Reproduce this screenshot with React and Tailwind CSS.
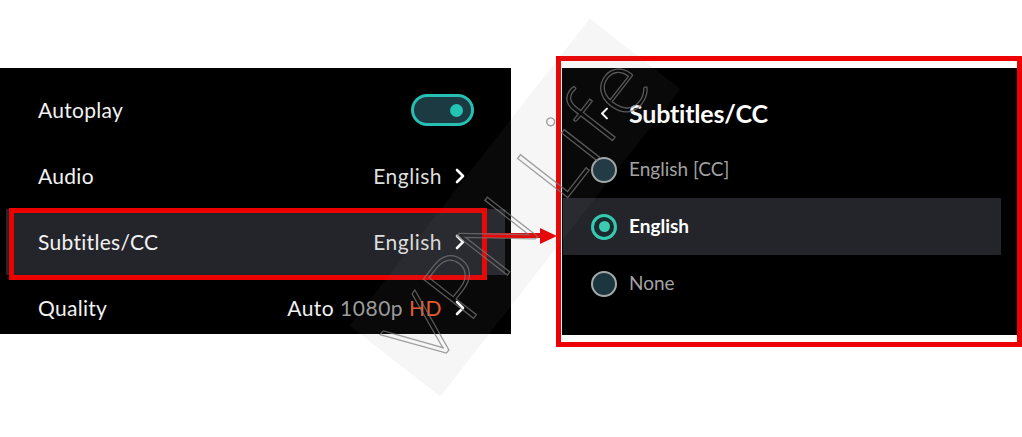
import React from "react";

const font = "font-['Lato','Liberation_Sans',sans-serif]";

function Chevron({ dir = "right", className = "" }) {
  const d = dir === "right" ? "M2 2l6 6-6 6" : "M8 2L2 8l6 6";
  return (
    <svg width="10" height="16" viewBox="0 0 10 16" className={className}>
      <path d={d} fill="none" stroke="currentColor" strokeWidth="2.6" strokeLinecap="round" strokeLinejoin="round" />
    </svg>
  );
}

function Toggle() {
  return (
    <div className="w-[63px] h-[32px] rounded-full border-[3px] border-[#25bfb3] bg-[#1c3a41] flex items-center justify-end pr-[8px]">
      <div className="w-[13px] h-[13px] rounded-full bg-[#22c4b6]" />
    </div>
  );
}

function SettingRow({ label, value, active, children }) {
  return (
    <div className={`mx-[6px] h-[66px] flex items-center justify-between pl-[32px] pr-[40px] ${active ? "bg-[#24252b]" : ""}`}>
      <span className="text-[21px] tracking-[0.3px] text-[#f2f2f2]">{label}</span>
      {children || (
        <div className="flex items-center gap-[13px] text-[21px] tracking-[0.5px] text-[#dedede]">
          <span>{value}</span>
          <Chevron className="text-white" />
        </div>
      )}
    </div>
  );
}

function Radio({ checked }) {
  if (checked) {
    return (
      <div className="w-[26px] h-[26px] rounded-full border-[3px] border-[#35c9b0] bg-[#1b2a2e] flex items-center justify-center">
        <div className="w-[11px] h-[11px] rounded-full bg-[#3ccbb0]" />
      </div>
    );
  }
  return <div className="w-[26px] h-[26px] rounded-full border-[2.5px] border-[#a3a9ab] bg-[#1c3640]" />;
}

function Option({ label, checked }) {
  return (
    <div className={`ml-[1px] mr-[16px] h-[57px] flex items-center pl-[28px] gap-[12px] ${checked ? "bg-[#24252b]" : ""}`}>
      <Radio checked={checked} />
      <span className={`text-[19px] ${checked ? "text-white font-bold" : "text-[#a2a2a2]"}`}>{label}</span>
    </div>
  );
}

export default function App() {
  return (
    <div className={`relative w-[1022px] h-[437px] bg-white overflow-hidden ${font}`}>
      <div className="flex items-start">
        {/* player settings */}
        <div className="mt-[68px] w-[511px] h-[266px] bg-black pt-[9px] overflow-hidden">
          <SettingRow label="Autoplay">
            <div className="mr-[-9px]">
              <Toggle />
            </div>
          </SettingRow>
          <SettingRow label="Audio" value="English" />
          <SettingRow label="Subtitles/CC" value="English" active />
          <SettingRow label="Quality">
            <div className="flex items-center gap-[13px] text-[21px] tracking-[0.5px]">
              <span>
                <span className="text-[#f0f0f0]">Auto </span>
                <span className="text-[#9c9c9c]">1080p </span>
                <span className="text-[#ea5a2c]">HD</span>
              </span>
              <Chevron className="text-white" />
            </div>
          </SettingRow>
        </div>

        {/* subtitles submenu */}
        <div className="mt-[56px] ml-[45px] w-[466px] h-[291px] border-[5px] border-[#ee0000] bg-white pt-[7px] pl-[1px] pb-[7px]">
          <div className="h-full bg-black">
            <div className="h-[73px] pt-[18px] flex items-center pl-[38px] gap-[20px] text-white">
              <Chevron dir="left" className="w-[9px] h-[13px]" />
              <span className="text-[25px] font-bold tracking-[-0.2px]">Subtitles/CC</span>
            </div>
            <Option label="English [CC]" />
            <Option label="English" checked />
            <Option label="None" />
          </div>
        </div>
      </div>

      {/* annotation: highlight box and arrow */}
      <div className="absolute left-[9px] top-[208px] w-[478px] h-[72px] border-[5px] border-[#ee0000]" />
      <svg className="absolute left-[486px] top-[226px]" width="72" height="20" viewBox="0 0 72 20">
        <rect x="0" y="7" width="56" height="5" fill="#ee0000" />
        <path d="M54 2L71 10L54 18Z" fill="#ee0000" />
      </svg>

      {/* watermark */}
      <div className="absolute left-[320px] top-[150px] w-[390px] h-[115px] rotate-[-52deg] bg-[#808080]/[0.07] flex items-center justify-center pointer-events-none">
        <span className="whitespace-nowrap text-[90px] font-light text-transparent [-webkit-text-stroke:1.3px_#7a7a7a] tracking-[3px] leading-none opacity-70">
          VPN Life
        </span>
      </div>
    </div>
  );
}
